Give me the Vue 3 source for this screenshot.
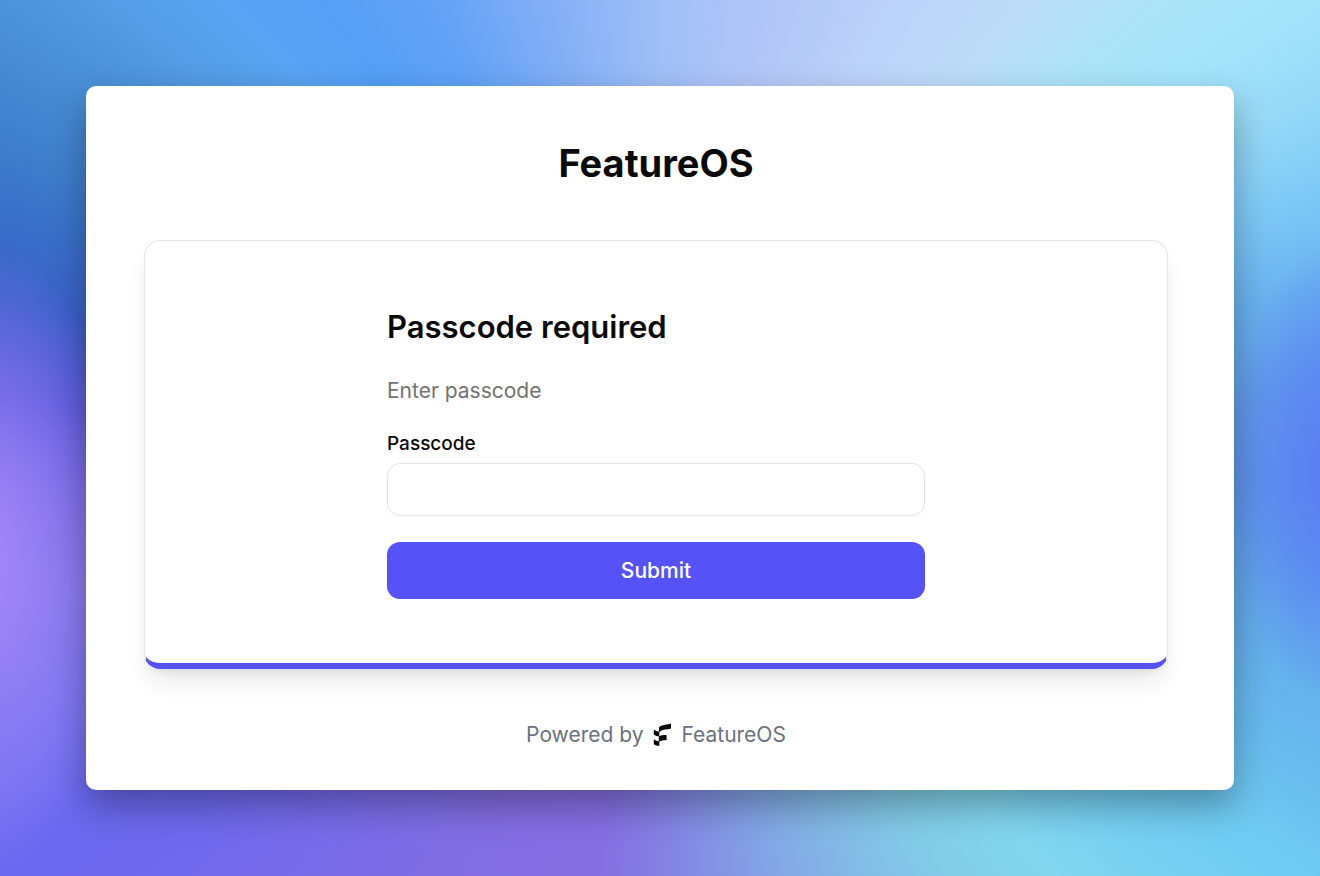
<script setup>
import { ref } from 'vue'

const passcode = ref('')
</script>

<template>
  <div class="backdrop">
    <main class="panel">
      <h1 class="brand">FeatureOS</h1>
      <section class="card">
        <form class="form" @submit.prevent>
          <h2 class="title">Passcode required</h2>
          <p class="hint">Enter passcode</p>
          <label class="label" for="passcode">Passcode</label>
          <input id="passcode" v-model="passcode" class="field" type="password" />
          <button class="submit" type="submit">Submit</button>
        </form>
      </section>
      <footer class="footer">
        <span>Powered by</span>
        <svg class="logo" viewBox="0 0 18 24" aria-hidden="true">
          <path d="M6 4 Q9 2 12 1.8 Q15 1.500 18 .5 V5.500 Q15 6.6 12 6.6 Q9 7 6 9.2Z" fill="#0a0a0a" />
          <path d="M.8 6.4 Q3 8.4 6.300 8.8 V13.500 Q3 13.2 .8 11.4Z" fill="#0a0a0a" />
          <path d="M5.800 13.2 Q9.500 11.6 13.600 12 V17 Q9.500 17 5.800 18.600Z" fill="#0a0a0a" />
          <path d="M.8 16.200 Q3 18 6.300 18.300 V23 Q3 22.8 .8 21.200Z" fill="#0a0a0a" />
        </svg>
        <a class="link" href="#">FeatureOS</a>
      </footer>
    </main>
  </div>
</template>

<style>
body {
  margin: 0;
}
</style>

<style scoped>
.backdrop {
  box-sizing: border-box;
  min-height: 100vh;
  padding: 86px;
  display: flex;
  font-family: Inter, "Liberation Sans", sans-serif;
  color: #0a0a0a;
  background:
    radial-gradient(ellipse 11% 36% at -1% 64%, #a488f8 0%, rgba(152, 130, 246, 0.75) 40%, rgba(130, 120, 248, 0) 100%),
    radial-gradient(ellipse 8% 26% at 101% 54%, #5a7bf2 0%, rgba(90, 130, 244, 0.7) 45%, rgba(96, 150, 240, 0) 100%),
    conic-gradient(
      from 0deg at 50% 50%,
      #a0bff7 0deg, #b1c6f7 14deg, #bdd4f9 31deg, #bcdcf8 40deg, #ade3f8 48deg,
      #a3e4fa 56deg, #98daf7 62deg, #7fcaf6 69deg, #6ab2f0 77deg, #629ce8 87deg,
      #6096e8 94deg, #62a6ea 104deg, #68bcee 117deg, #6fcbf2 124deg, #76d0f2 130deg,
      #82d6ee 138deg, #82cce8 147deg, #83bae6 156deg, #83a4e6 166deg, #8480e4 180deg,
      #846fe2 188deg, #816de3 207deg, #786bea 221deg, #6d68ee 232deg, #6b69f0 238deg,
      #7572f0 246deg, #8274e6 256deg, #7262e0 264deg, #4e50d4 273deg, #3a60c8 282deg,
      #3970c8 289deg, #3f80cc 295deg, #4a90d8 302deg, #549ce4 308deg, #59a3f2 315deg,
      #559ff5 322deg, #62a2f6 332deg, #84aff6 346deg, #a0bff7 360deg
    );
}

.panel {
  flex: 1;
  padding: 53px 66px 40px 58px;
  border-radius: 10px;
  background: #fff;
  box-shadow: 0 16px 36px rgba(0, 0, 0, 0.32);
}

.brand {
  margin: 0 0 53px;
  font-size: 38px;
  line-height: 48px;
  font-weight: 700;
  text-align: center;
}

.card {
  padding: 64px 24px;
  border: 1px solid #e5e5e5;
  border-bottom: 6px solid #5552f7;
  border-radius: 16px;
  box-shadow: 0 16px 24px -5px rgba(0, 0, 0, 0.1), 0 6px 10px -6px rgba(0, 0, 0, 0.1);
}

.form {
  max-width: 538px;
  margin: 0 auto;
  display: flex;
  flex-direction: column;
}

.title {
  margin: 0 0 28px;
  font-size: 31px;
  line-height: 44px;
  font-weight: 600;
}

.hint {
  margin: 0 0 25px;
  font-size: 21px;
  line-height: 28px;
  color: #737373;
}

.label {
  margin-bottom: 5px;
  font-size: 19px;
  line-height: 28px;
  font-weight: 500;
}

.field {
  box-sizing: border-box;
  height: 53px;
  margin-bottom: 26px;
  padding: 0 16px;
  border: 1px solid #e5e5e5;
  border-radius: 13px;
  background: #fff;
  font: inherit;
  font-size: 21px;
}

.submit {
  height: 57px;
  border: 0;
  border-radius: 13px;
  background: #5552f7;
  color: #fff;
  font: inherit;
  font-size: 21px;
  font-weight: 500;
}

.footer {
  margin-top: 51px;
  display: flex;
  align-items: center;
  justify-content: center;
  gap: 10px;
  font-size: 21px;
  line-height: 30px;
  color: #6b7280;
}

.logo {
  width: 18px;
  height: 24px;
}

.link {
  color: inherit;
  text-decoration: none;
}
</style>
